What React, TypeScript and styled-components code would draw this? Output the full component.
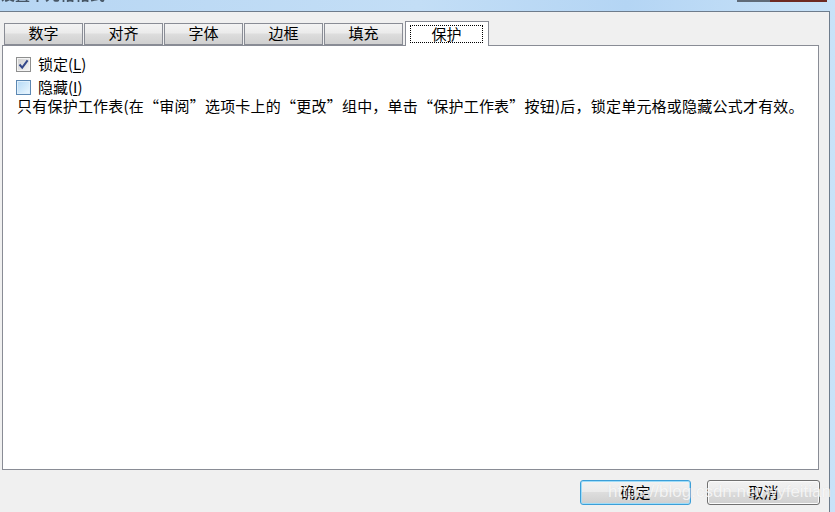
import React from "react";
import styled, { createGlobalStyle } from "styled-components";

const Global = createGlobalStyle`
  html, body { margin: 0; padding: 0; background: #bfdcf6; }
  body { font-family: "Noto Sans CJK SC", "Liberation Sans", sans-serif; }
  * { box-sizing: border-box; }
`;

const Window = styled.div`
  width: 835px;
  height: 512px;
  display: flex;
  flex-direction: column;
  overflow: hidden;
  background: linear-gradient(90deg, #b7d6f3 0%, #c3def6 50%, #b4d5f4 75%, #c8e2f8 100%);
`;

const TitleBar = styled.div`
  height: 11px;
  display: flex;
  align-items: flex-start;
  overflow: hidden;
  flex-shrink: 0;
`;

const TitleText = styled.span`
  font-size: 15px;
  line-height: 15px;
  margin-top: -14px;
  color: #2a3642;
  font-weight: bold;
  filter: blur(0.5px);
  opacity: 0.8;
  flex: 1;
`;

const CloseEdge = styled.div`
  display: flex;
  margin-right: 8px;
  height: 2px;
`;

const CloseSeg = styled.span<{ $w: number; $c: string }>`
  width: ${(p) => p.$w}px;
  height: 2px;
  background: ${(p) => p.$c};
`;

const Body = styled.div`
  flex: 1;
  display: flex;
`;

const Frame = styled.div`
  width: 830px;
  background: #f0f0f0;
  border-top: 1px solid #6e7c8c;
  border-right: 1px solid #6e7c8c;
  display: flex;
  flex-direction: column;
  padding-top: 8px;
`;

const RightStrip = styled.div`
  flex: 1;
`;

const TabStrip = styled.div`
  display: flex;
  align-items: flex-end;
  gap: 1px;
  padding-left: 4px;
  height: 25px;
  position: relative;
  z-index: 1;
`;

const Tab = styled.div<{ $active?: boolean }>`
  width: ${(p) => (p.$active ? 84 : 79)}px;
  margin-left: ${(p) => (p.$active ? 1 : 0)}px;
  height: ${(p) => (p.$active ? 25 : 22)}px;
  margin-bottom: ${(p) => (p.$active ? -1 : 0)}px;
  border: 1px solid #898c95;
  border-bottom: ${(p) => (p.$active ? "none" : "1px solid #898c95")};
  background: ${(p) =>
    p.$active ? "#ffffff" : "linear-gradient(180deg, #f3f3f3 0%, #ebebeb 45%, #dddddd 50%, #d0d0d0 100%)"};
  display: flex;
  align-items: center;
  justify-content: center;
  padding: ${(p) => (p.$active ? "3px 5px 3px 4px" : "0 0 3px 0")};
  font-size: 15px;
  color: #000;
`;

const FocusLabel = styled.span`
  flex: 1;
  align-self: stretch;
  border: 1px dotted #000;
  display: flex;
  align-items: center;
  justify-content: center;
  padding-bottom: 2px;
  line-height: 1;
`;

const TabLabel = styled.span`
  line-height: 1;
`;

const Panel = styled.div`
  margin-left: 2px;
  margin-right: 10px;
  height: 425px;
  border: 1px solid #898c95;
  background: #ffffff;
  padding: 7px 0 0 13px;
  display: flex;
  flex-direction: column;
`;

const CheckRow = styled.label`
  display: flex;
  align-items: center;
  gap: 7px;
  height: 23px;
  font-size: 15px;
  color: #000;
`;

const RowText = styled.span`
  line-height: 1;
  padding-bottom: 2px;
`;

const Box = styled.span<{ $checked?: boolean }>`
  width: 15px;
  height: 15px;
  display: inline-flex;
  align-items: center;
  justify-content: center;
  border: 1px solid ${(p) => (p.$checked ? "#8e8f8f" : "#5c88b3")};
  box-shadow: inset 0 0 0 1px ${(p) => (p.$checked ? "#f4f4f4" : "#dff0fc")};
  background: ${(p) =>
    p.$checked
      ? "linear-gradient(135deg, #cfcfcf 0%, #e6e6e6 60%, #f7f7f7 100%)"
      : "linear-gradient(135deg, #b4d9f6 0%, #d5ebfb 60%, #eef8fe 100%)"};
`;

const Accel = styled.span`
  text-decoration: underline;
  text-underline-offset: 2px;
`;

const Note = styled.p`
  margin: -2px 0 0 -13px;
  padding-left: 14px;
  font-size: 15px;
  line-height: 18px;
  letter-spacing: 0.22px;
  color: #000;
  white-space: nowrap;
`;

const Footer = styled.div`
  position: relative;
  display: flex;
  justify-content: flex-end;
  gap: 16px;
  padding: 10px 9px 0 0;
`;

const Button = styled.button<{ $default?: boolean; $w: number }>`
  width: ${(p) => p.$w}px;
  height: 25px;
  border-radius: 3px;
  border: 1px solid ${(p) => (p.$default ? "#3c9fd8" : "#707070")};
  box-shadow: inset 0 0 0 1px ${(p) => (p.$default ? "#9fdcf8" : "#fbfbfb")};
  background: linear-gradient(180deg, #f2f2f2 0%, #ebebeb 48%, #dddddd 50%, #cfcfcf 100%);
  font-family: "Noto Sans CJK SC", sans-serif;
  font-size: 15px;
  color: #000;
  padding: 0 0 2px 0;
  line-height: 1;
`;

const Watermark = styled.span`
  position: absolute;
  left: 608px;
  top: 12px;
  font-family: "Liberation Sans", Arial, sans-serif;
  font-size: 17px;
  color: rgba(255, 255, 255, 0.75);
  text-shadow: 0 0 1px rgba(180, 180, 180, 0.35);
  pointer-events: none;
  white-space: nowrap;
`;

const Check = () => (
  <svg width="11" height="11" viewBox="0 0 11 11">
    <path d="M1.5 5.5 L4.2 8.6 L9.6 1.4" fill="none" stroke="#34488a" strokeWidth="2" />
  </svg>
);

const tabs = ["数字", "对齐", "字体", "边框", "填充"];

export default function App() {
  return (
    <>
      <Global />
      <Window>
        <TitleBar>
          <TitleText>设置单元格格式</TitleText>
          <CloseEdge>
            <CloseSeg $w={33} $c="#5f6b78" />
            <CloseSeg $w={57} $c="#6e2a22" />
          </CloseEdge>
        </TitleBar>
        <Body>
          <Frame>
            <TabStrip>
              {tabs.map((t) => (
                <Tab key={t}>
                  <TabLabel>{t}</TabLabel>
                </Tab>
              ))}
              <Tab $active>
                <FocusLabel>保护</FocusLabel>
              </Tab>
            </TabStrip>
            <Panel>
              <CheckRow>
                <Box $checked>
                  <Check />
                </Box>
                <RowText>
                  锁定(<Accel>L</Accel>)
                </RowText>
              </CheckRow>
              <CheckRow>
                <Box />
                <RowText>
                  隐藏(<Accel>I</Accel>)
                </RowText>
              </CheckRow>
              <Note>
                只有保护工作表(在“审阅”选项卡上的“更改”组中，单击“保护工作表”按钮)后，锁定单元格或隐藏公式才有效。
              </Note>
            </Panel>
            <Footer>
              <Button $default $w={111}>确定</Button>
              <Button $w={113}>取消</Button>
              <Watermark>https://blog.csdn.net/wyfeitian</Watermark>
            </Footer>
          </Frame>
          <RightStrip />
        </Body>
      </Window>
    </>
  );
}
